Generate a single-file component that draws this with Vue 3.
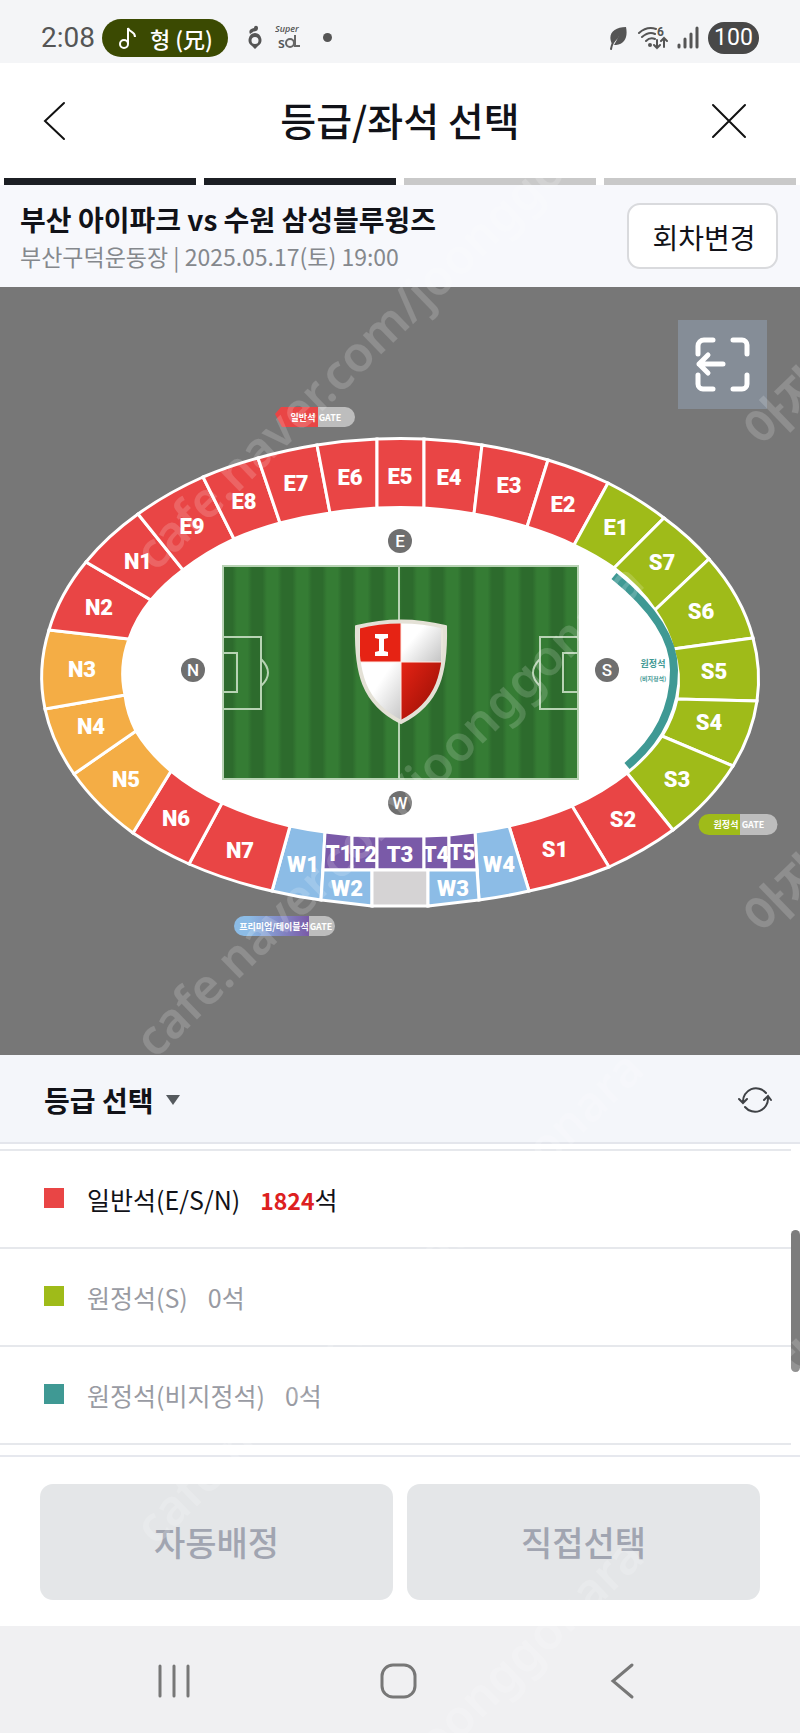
<template>
  <div class="app">
    <div class="status">
      <span class="clock">2:08</span>
      <span class="music">
        <svg width="20" height="26" viewBox="0 0 20 26">
          <circle cx="6" cy="19" r="4" />
          <path d="M10 19V3c2 5 7 3 7 9" />
        </svg>
        <span>형 (兄)</span>
      </span>
      <svg class="fruit" width="16" height="26" viewBox="0 0 16 26">
        <path
          fill-rule="evenodd"
          d="M8 8a7 7 0 0 1 3 13l-3 3-3-3A7 7 0 0 1 8 8zm0 4a3 3 0 1 0 0 7 3 3 0 0 0 0-7z"
        />
        <path d="M3 9C1 5 4 4 7 3c0-3 4-3 4 0 0 4-4 3-5 4z" />
      </svg>
      <svg class="supersol" width="28" height="36" viewBox="0 0 28 36">
        <text x="0" y="12" class="super">Super</text>
        <text x="3" y="28" class="sol">s</text>
        <circle cx="15" cy="23" r="4" />
        <path d="M20 15v11h5" />
      </svg>
      <span class="dot"></span>
      <span class="status-right">
        <svg width="20" height="26" viewBox="0 0 20 26">
          <path
            class="solid"
            d="M18 2c2 10-1 17-10 18l-2 0 5-9-7 8C-1 9 6 2 18 2z"
          />
          <path class="line" d="M10 12C6 15 4 18 3 24" />
        </svg>
        <svg width="31" height="26" viewBox="0 0 31 26">
          <path
            class="line"
            d="M2 8Q10 1 19 4M5 12Q12 6 18 9M9 16Q13 12 18 14"
          />
          <circle class="solid" cx="13" cy="20" r="2" />
          <path class="line" d="M20 15v8m-3-3 3 3 3-3M27 22v-9m-3 3 3-3 3 3" />
          <text x="20" y="11">6</text>
        </svg>
        <svg width="22" height="26" viewBox="0 0 22 26">
          <path class="line signal" d="M2 22v-2M8 22v-8M14 22V9M20 22V3" />
        </svg>
        <span class="battery">100</span>
      </span>
    </div>

    <header class="header">
      <button class="icon-btn" aria-label="이전">
        <svg width="40" height="40" viewBox="0 0 40 40">
          <path d="M29 2 10 20l19 18" />
        </svg>
      </button>
      <h1>등급/좌석 선택</h1>
      <button class="icon-btn" aria-label="닫기">
        <svg width="40" height="40" viewBox="0 0 40 40">
          <path d="M4 4l32 32M36 4 4 36" />
        </svg>
      </button>
    </header>

    <div class="steps">
      <span v-for="n in 4" :key="n" :class="{ done: n <= step }"></span>
    </div>

    <section class="match">
      <div>
        <h2>부산 아이파크 vs 수원 삼성블루윙즈</h2>
        <p>부산구덕운동장 | 2025.05.17(토) 19:00</p>
      </div>
      <button>회차변경</button>
    </section>

    <section class="map">
      <svg class="stadium" viewBox="0 287 800 768">
        <defs>
          <linearGradient id="stripe">
            <stop offset="0" stop-color="#2d6b2d" />
            <stop offset="0.35" stop-color="#2d6b2d" />
            <stop offset="0.5" stop-color="#357c34" />
            <stop offset="0.85" stop-color="#357c34" />
            <stop offset="1" stop-color="#2d6b2d" />
          </linearGradient>
          <pattern
            id="grass"
            x="222"
            y="566"
            width="30"
            height="214"
            patternUnits="userSpaceOnUse"
          >
            <rect width="30" height="214" fill="url(#stripe)" />
          </pattern>
          <linearGradient id="silver" x2="1" y2="1">
            <stop offset="0.4" stop-color="#fff" />
            <stop offset="1" stop-color="#c4c4c4" />
          </linearGradient>
          <linearGradient id="crimson" x2="1" y2="1">
            <stop offset="0" stop-color="#e62314" />
            <stop offset="1" stop-color="#8f0d04" />
          </linearGradient>
          <linearGradient id="table">
            <stop offset="0.2" stop-color="#8cbce6" />
            <stop offset="1" stop-color="#7a5aa8" />
          </linearGradient>
          <clipPath id="crest">
            <path :d="crestPath" />
          </clipPath>
        </defs>

        <ellipse cx="400" cy="672" rx="300" ry="190" fill="#fff" />
        <g stroke="#fff" stroke-width="3">
          <path
            v-for="s in sections"
            :key="s.name"
            :d="s.path"
            :fill="s.color"
          />
          <path
            v-for="b in boxes"
            :key="b.name"
            :d="b.path"
            :fill="b.color"
          />
        </g>
        <path
          d="M614 576C640 597 674 630 674 670C674 710 656 742 627 766"
          fill="none"
          stroke="#3f9994"
          stroke-width="8"
        />

        <!-- pitch -->
        <rect x="223" y="566" width="355" height="213" fill="url(#grass)" />
        <g class="pitch-lines">
          <rect x="223" y="566" width="355" height="213" />
          <path d="M399 566v213" />
          <path d="M223 637h38v72h-38M223 653h14v39h-14M261 659q14 14 0 27" />
          <path d="M578 637h-38v72h38M578 653h-15v39h15M540 659q-14 14 0 27" />
        </g>

        <path :d="crestPath" fill="#e9e6dc" stroke="#8a8a80" stroke-width="2" />
        <g clip-path="url(#crest)">
          <rect x="360" y="615" width="41" height="47" fill="#e62314" />
          <rect x="401" y="615" width="40" height="47" fill="url(#silver)" />
          <rect x="360" y="662" width="41" height="62" fill="url(#silver)" />
          <rect x="401" y="662" width="40" height="62" fill="url(#crimson)" />
          <path d="M401 618v106M358 662h86" stroke="#ffe9e2" />
        </g>
        <path :d="crestPath" fill="none" stroke="#e4e1d6" stroke-width="4" />
        <path
          d="M375 634h13v4l-4 1v12l4 1v4h-13v-4l4-1v-12l-4-1z"
          fill="#fff"
        />

        <g v-for="c in compass" :key="c.name">
          <circle :cx="c.x" :cy="c.y" r="12" fill="#6f6f6f" />
          <text class="compass" :x="c.x" :y="c.y + 6">{{ c.name }}</text>
        </g>

        <text
          v-for="l in labels"
          :key="l[0]"
          class="seat"
          :x="l[1]"
          :y="l[2] + 8"
        >
          {{ l[0] }}
        </text>

        <g fill="#3f9994">
          <text class="gate away" x="653" y="667">원정석</text>
          <text class="gate tiny" x="653" y="681">(비지정석)</text>
        </g>

        <!-- gates -->
        <path d="M318 407h27a10 10 0 0 1 0 20h-27z" fill="#bdbdbd" />
        <path d="M318 407h-37l-6 7 7 13h36z" fill="#e94545" />
        <text class="gate" x="303" y="421">일반석</text>
        <text class="gate" x="330" y="421">GATE</text>

        <path d="M740 814h27a10 10 0 0 1 0 21h-27z" fill="#bdbdbd" />
        <path d="M740 814h-31a10 10 0 0 0 0 21h31z" fill="#9fbb19" />
        <text class="gate" x="726" y="828">원정석</text>
        <text class="gate" x="753" y="828">GATE</text>

        <path d="M309 916h16a10 10 0 0 1 0 20h-16z" fill="#bdbdbd" />
        <path d="M309 916h-65a10 10 0 0 0 0 20h65z" fill="url(#table)" />
        <text class="gate" x="274" y="930">프리미엄/테이블석</text>
        <text class="gate" x="321" y="930">GATE</text>
      </svg>

      <button class="fit" aria-label="전체보기">
        <svg width="56" height="56" viewBox="0 0 56 56">
          <path
            d="M18 3H9a6 6 0 0 0-6 6v8M38 3h9a5 5 0 0 1 5 5v9M3 38v9a5 5 0 0 0 5 5h10M38 52h9a5 5 0 0 0 5-5v-9M28 27H4M13 18l-9 9 9 9"
          />
        </svg>
      </button>
    </section>

    <section class="filter">
      <button class="filter-btn">
        등급 선택
        <svg width="16" height="12" viewBox="0 0 16 12">
          <path d="M1 1h14L8 11z" fill="#555a5e" />
        </svg>
      </button>
      <button class="icon-btn reload" aria-label="새로고침">
        <svg width="34" height="30" viewBox="0 0 34 30">
          <path d="M5 17A13 13 0 0 1 28 8M1 14l4 4 4-4" />
          <path d="M30 13A13 13 0 0 1 7 22M26 15l4-4 3 4" />
        </svg>
      </button>
    </section>

    <section class="grades">
      <ul>
        <li v-for="g in grades" :key="g.name" :class="{ off: !g.count }">
          <i :style="{ backgroundColor: g.color }"></i>
          <span class="grade-name">{{ g.name }}</span>
          <span class="count"><b>{{ g.count }}</b>석</span>
        </li>
      </ul>
      <div class="thumb"></div>
    </section>

    <footer class="actions">
      <button disabled>자동배정</button>
      <button disabled>직접선택</button>
    </footer>

    <nav class="nav">
      <button aria-label="최근 앱">
        <svg width="38" height="38" viewBox="0 0 38 38">
          <path d="M5 4v30M19 4v30M33 4v30" />
        </svg>
      </button>
      <button aria-label="홈">
        <svg width="38" height="38" viewBox="0 0 38 38">
          <rect x="2" y="3" width="33" height="32" rx="11" />
        </svg>
      </button>
      <button aria-label="뒤로">
        <svg width="38" height="38" viewBox="0 0 38 38">
          <path d="M27 3 8 19l19 16" />
        </svg>
      </button>
    </nav>

    <svg
      class="watermark"
      viewBox="0 0 800 1733"
      preserveAspectRatio="xMidYMin slice"
      aria-hidden="true"
    >
      <g v-for="y in [573, 1060, 1547, 2034]" :key="y">
        <text :transform="`translate(155 ${y}) rotate(-44)`">
          cafe.naver.com/joonggonara
        </text>
        <text :transform="`translate(765 ${y - 122}) rotate(-44)`">아자</text>
      </g>
    </svg>
  </div>
</template>

<script setup>
import { ref } from "vue";

const RED = "#e94545";
const GREEN = "#9fbb19";
const ORANGE = "#f4ad45";
const BLUE = "#8cbce6";
const PURPLE = "#7a5aa8";

const step = ref(2);

const grades = ref([
  { name: "일반석(E/S/N)", count: 1824, color: RED },
  { name: "원정석(S)", count: 0, color: GREEN },
  { name: "원정석(비지정석)", count: 0, color: "#3f9994" },
]);

const crestPath =
  "M357 627Q401 616 445 627C446 672 439 703 401 722C363 703 356 672 357 627Z";

// dividers between the blocks, clockwise: [outer x, outer y, inner x, inner y]
// each one opens the block named after it
const dividers = [
  [321, 900, 325, 832, "W1", BLUE],
  [272, 891, 290, 826, "N7", RED],
  [189, 864, 222, 803, "N6", RED],
  [133, 833, 171, 771, "N5", ORANGE],
  [74, 774, 136, 731, "N4", ORANGE],
  [45, 709, 125, 695, "N3", ORANGE],
  [49, 630, 129, 639, "N2", RED],
  [86, 562, 151, 600, "N1", RED],
  [138, 514, 183, 570, "E9", RED],
  [203, 477, 234, 539, "E8", RED],
  [258, 458, 280, 523, "E7", RED],
  [317, 445, 330, 513, "E6", RED],
  [377, 439, 377, 508, "E5", RED],
  [424, 439, 424, 508, "E4", RED],
  [482, 445, 474, 514, "E3", RED],
  [548, 460, 527, 527, "E2", RED],
  [608, 483, 574, 545, "E1", GREEN],
  [664, 518, 614, 568, "S7", GREEN],
  [709, 559, 655, 610, "S6", GREEN],
  [753, 638, 673, 649, "S5", GREEN],
  [757, 701, 677, 699, "S4", GREEN],
  [733, 766, 662, 736, "S3", GREEN],
  [673, 830, 627, 773, "S2", RED],
  [609, 867, 572, 806, "S1", RED],
  [529, 891, 509, 826, "W4", BLUE],
  [479, 900, 475, 832],
];

const sections = dividers.slice(0, -1).map((d, i) => {
  const n = dividers[i + 1];
  return {
    name: d[4],
    color: d[5],
    path: `M${d[0]} ${d[1]}A359 234 0 0 1 ${n[0]} ${n[1]}L${n[2]} ${n[3]}A277 164 0 0 0 ${d[2]} ${d[3]}Z`,
  };
});

const boxes = [
  { name: "T1", color: PURPLE, path: "M325 832L352 835V870H323Z" },
  { name: "T2", color: PURPLE, path: "M352 835L377 836V870H352Z" },
  { name: "T3", color: PURPLE, path: "M377 836H424V870H377Z" },
  { name: "T4", color: PURPLE, path: "M424 836L449 835V870H424Z" },
  { name: "T5", color: PURPLE, path: "M449 835L475 832L477 870H449Z" },
  { name: "W2", color: BLUE, path: "M323 870H372V906L321 900Z" },
  { name: "stage", color: "#d5d3d4", path: "M372 870H428V906H372Z" },
  { name: "W3", color: BLUE, path: "M428 870H477L479 900L428 906Z" },
];

const labels = [
  ["E1", 616, 527],
  ["E2", 563, 504],
  ["E3", 509, 485],
  ["E4", 449, 477],
  ["E5", 400, 476],
  ["E6", 350, 477],
  ["E7", 296, 483],
  ["E8", 244, 501],
  ["E9", 192, 526],
  ["N1", 138, 561],
  ["N2", 99, 607],
  ["N3", 82, 669],
  ["N4", 91, 726],
  ["N5", 126, 779],
  ["N6", 176, 818],
  ["N7", 240, 850],
  ["W1", 303, 864],
  ["W2", 347, 888],
  ["W3", 453, 888],
  ["W4", 499, 864],
  ["T1", 339, 853],
  ["T2", 364, 854],
  ["T3", 400, 854],
  ["T4", 436, 854],
  ["T5", 462, 852],
  ["S1", 555, 849],
  ["S2", 623, 819],
  ["S3", 677, 779],
  ["S4", 709, 722],
  ["S5", 714, 671],
  ["S6", 701, 611],
  ["S7", 662, 562],
];

const compass = [
  { name: "E", x: 400, y: 541 },
  { name: "N", x: 193, y: 670 },
  { name: "S", x: 607, y: 670 },
  { name: "W", x: 400, y: 803 },
];
</script>

<style>
body {
  margin: 0;
  background-color: #fff;
}
</style>

<style scoped>
.app {
  position: relative;
  display: flex;
  flex-direction: column;
  min-height: 100vh;
  overflow: hidden;
  font-family: "Noto Sans CJK KR", sans-serif;
  color: #111218;
}

button {
  padding: 0;
  border: 0;
  background: none;
  font-family: inherit;
  color: inherit;
}

svg {
  display: block;
}

h1,
h2,
p,
ul {
  margin: 0;
  padding: 0;
}

/* status bar */
.status {
  display: flex;
  align-items: center;
  box-sizing: border-box;
  height: 63px;
  padding: 12px 41px 0 41px;
  background-color: #f4f5f7;
  color: #555;
}

.clock {
  width: 61px;
  font: 400 28px/36px Roboto, sans-serif;
}

.music {
  display: flex;
  align-items: center;
  gap: 12px;
  box-sizing: border-box;
  width: 126px;
  height: 38px;
  padding-left: 16px;
  border-radius: 19px;
  background-color: #3b4a02;
  color: #fff;
  font-size: 22px;
  font-weight: 500;
  line-height: 36px;
  white-space: nowrap;
}

.music svg {
  fill: none;
  stroke: #fff;
  stroke-width: 2;
}

.fruit {
  margin-left: 19px;
  fill: #555;
}

.supersol {
  margin-left: 12px;
  fill: none;
  stroke: #666;
  stroke-width: 2;
}

.supersol text {
  fill: #555;
  stroke: none;
}

.super {
  font: italic 600 9px "Open Sans", sans-serif;
}

.sol {
  font: 600 14px "Open Sans", sans-serif;
}

.dot {
  width: 9px;
  height: 9px;
  margin-left: 20px;
  border-radius: 50%;
  background-color: #555;
}

.status-right {
  display: flex;
  align-items: center;
  gap: 9px;
  margin-left: auto;
}

.status-right .solid,
.status-right text {
  fill: #555;
}

.status-right text {
  font: 700 12px Roboto, sans-serif;
}

.status-right .line {
  fill: none;
  stroke: #555;
  stroke-width: 2;
  stroke-linecap: round;
}

.status-right .signal {
  stroke-width: 3;
}

.battery {
  width: 51px;
  border-radius: 16px;
  background-color: #484848;
  color: #fff;
  font: 400 23px/32px Roboto, sans-serif;
  text-align: center;
}

/* title */
.header {
  display: flex;
  align-items: center;
  justify-content: space-between;
  height: 115px;
  padding: 0 51px 0 35px;
}

.header h1 {
  padding: 0 0 3px 16px;
  font-size: 39px;
  font-weight: 500;
  line-height: 56px;
}

.icon-btn svg {
  fill: none;
  stroke: #111;
  stroke-width: 2;
  stroke-linecap: round;
}

.steps {
  display: grid;
  grid-template-columns: repeat(4, 1fr);
  gap: 8px;
  padding: 0 4px;
}

.steps span {
  height: 7px;
  background-color: #c9c9c9;
}

.steps .done {
  background-color: #1c1f24;
}

/* match info */
.match {
  display: flex;
  align-items: center;
  justify-content: space-between;
  height: 102px;
  padding: 0 22px 0 20px;
  background-color: #f7f8fc;
}

.match h2 {
  padding-top: 2px;
  font-size: 28px;
  font-weight: 700;
  line-height: 38px;
}

.match p {
  color: #85888d;
  font-size: 23px;
  font-weight: 400;
  line-height: 36px;
}

.match button {
  width: 151px;
  height: 66px;
  padding: 2px 0 0 3px;
  border: 2px solid #d9dadd;
  border-radius: 13px;
  background-color: #fff;
  font-size: 28px;
}

/* seat map */
.map {
  position: relative;
  background-color: #777;
}

.stadium {
  width: 100%;
}

.pitch-lines {
  fill: none;
  stroke: #b8d3b4;
  stroke-width: 2;
}

.seat,
.compass,
.gate {
  text-anchor: middle;
}

.seat {
  fill: #fff;
  font: 900 22px Roboto, sans-serif;
}

.compass {
  fill: #fff;
  font: 500 17px Roboto, sans-serif;
}

.gate {
  font-size: 9px;
  font-weight: 700;
}

.gate:not(.away, .tiny) {
  fill: #fff;
}

.tiny {
  font-size: 6px;
}

.fit {
  position: absolute;
  top: 33px;
  right: 33px;
  display: grid;
  place-items: center;
  width: 89px;
  height: 89px;
  background-color: #858d97;
}

.fit svg {
  fill: none;
  stroke: #fff;
  stroke-width: 5;
  stroke-linecap: round;
  stroke-linejoin: round;
}

/* grade list */
.filter {
  display: flex;
  align-items: center;
  justify-content: space-between;
  box-sizing: border-box;
  height: 89px;
  padding: 2px 28px 0 44px;
  border-bottom: 2px solid #e4e6ec;
  background-color: #f4f6fa;
}

.filter-btn {
  display: flex;
  align-items: center;
  gap: 12px;
  font-size: 28px;
  font-weight: 700;
  line-height: 40px;
}

.reload svg {
  stroke: #3f4246;
}

.grades {
  position: relative;
  padding: 5px 9px 10px 0;
}

.grades ul {
  border-top: 2px solid #e6e8ec;
  list-style: none;
}

.grades li {
  display: flex;
  align-items: center;
  box-sizing: border-box;
  height: 98px;
  padding-left: 44px;
  border-bottom: 2px solid #e6e8ec;
  font-size: 25px;
  line-height: 36px;
}

.grades i {
  width: 20px;
  height: 20px;
  margin: 0 23px 2px 0;
}

.grade-name {
  margin-right: 20px;
}

.count b {
  color: #dd2020;
  font-size: 23px;
}

.off {
  color: #999ba3;
}

.off .count b {
  color: inherit;
  font-size: 25px;
  font-weight: 400;
}

.thumb {
  position: absolute;
  top: 86px;
  right: 0;
  width: 9px;
  height: 142px;
  border-radius: 5px;
  background-color: #7d7d7d;
}

.actions {
  display: grid;
  grid-template-columns: 1fr 1fr;
  gap: 14px;
  padding: 27px 40px 26px;
  border-top: 2px solid #e6e8ee;
}

.actions button {
  height: 116px;
  padding-bottom: 2px;
  border-radius: 13px;
  background-color: #e4e6e8;
  color: #a1a5b1;
  font-size: 34px;
  font-weight: 500;
}

.nav {
  display: grid;
  flex: 1;
  grid-template-columns: repeat(3, 1fr);
  min-height: 106px;
  padding: 2px 64px 0 62px;
  box-sizing: border-box;
  background-color: #f0f0f2;
}

.nav button {
  display: grid;
  place-items: center;
}

.nav svg {
  fill: none;
  stroke: #777;
  stroke-width: 3;
  stroke-linecap: round;
}

.watermark {
  position: absolute;
  inset: 0;
  width: 100%;
  height: 100%;
  fill: #fff;
  fill-opacity: 0.17;
  font: 600 49px "Noto Sans", "Noto Sans CJK KR", sans-serif;
  pointer-events: none;
}
</style>
